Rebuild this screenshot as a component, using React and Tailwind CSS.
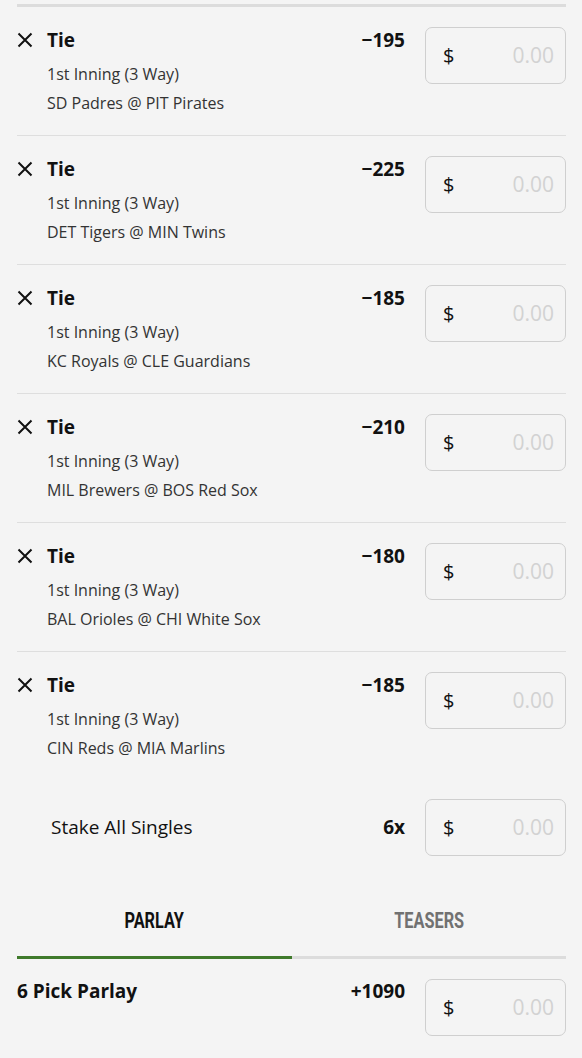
import { useState } from "react";

const picks = [
  { id: 1, odds: "\u2212195", game: "SD Padres @ PIT Pirates" },
  { id: 2, odds: "\u2212225", game: "DET Tigers @ MIN Twins" },
  { id: 3, odds: "\u2212185", game: "KC Royals @ CLE Guardians" },
  { id: 4, odds: "\u2212210", game: "MIL Brewers @ BOS Red Sox" },
  { id: 5, odds: "\u2212180", game: "BAL Orioles @ CHI White Sox" },
  { id: 6, odds: "\u2212185", game: "CIN Reds @ MIA Marlins" },
];

function CloseIcon() {
  return (
    <svg width="16" height="16" viewBox="0 0 16 16" className="shrink-0">
      <path d="M1.5 1.5 L14.5 14.5 M14.5 1.5 L1.5 14.5" stroke="#111" strokeWidth="2" fill="none" />
    </svg>
  );
}

function StakeBox() {
  return (
    <div className="flex h-[57px] w-[141px] shrink-0 items-center justify-between rounded-[7px] border border-[#cfcfcf] pl-[17px] pr-[11px]">
      <span className="text-[20px] text-[#111]">$</span>
      <input
        className="w-[80px] bg-transparent text-right text-[21px] text-[#111] outline-none placeholder:text-[#d2d2d2]"
        placeholder="0.00"
      />
    </div>
  );
}

function PickRow({ pick, last }) {
  return (
    <div className={"flex pt-[20px] pb-[17px] " + (last ? "" : "border-b border-[#dedede]")}>
      <div className="flex-1">
        <div className="flex h-[26px] items-center">
          <div className="flex w-[30px] items-center">
            <CloseIcon />
          </div>
          <span className="text-[19px] font-bold text-[#111]">Tie</span>
        </div>
        <div className="mt-[7px] pl-[30px] text-[16px] leading-[29px] text-[#333]">
          <div>1st Inning (3 Way)</div>
          <div>{pick.game}</div>
        </div>
      </div>
      <div className="flex h-[26px] items-center pr-[20px] text-[19px] font-bold text-[#111]">
        {pick.odds}
      </div>
      <StakeBox />
    </div>
  );
}

export default function App() {
  const [tab, setTab] = useState("parlay");

  return (
    <div
      className="min-h-screen bg-[#f4f4f4] pl-[17px] pr-[16px] pt-[4px]"
      style={{ fontFamily: '"Open Sans", sans-serif' }}
    >
      <div className="h-[3px] bg-[#dcdcdc]" />

      {/* Picks */}
      {picks.map((pick, i) => (
        <PickRow key={pick.id} pick={pick} last={i === picks.length - 1} />
      ))}

      {/* Stake all singles */}
      <div className="mt-[1px] flex items-center pt-[18px]">
        <span className="flex-1 pl-[34px] text-[19px] text-[#111]">Stake All Singles</span>
        <span className="pr-[20px] text-[19px] font-bold text-[#111]">6x</span>
        <StakeBox />
      </div>

      {/* Tabs */}
      <div className="mt-[41px] flex">
        {[
          { key: "parlay", label: "PARLAY" },
          { key: "teasers", label: "TEASERS" },
        ].map((t) => (
          <button
            key={t.key}
            onClick={() => setTab(t.key)}
            className={
              "flex h-[62px] flex-1 items-center justify-center border-b-[3px] pb-[12px] " +
              (tab === t.key ? "border-[#3f7a2b] text-[#111]" : "border-[#dcdcdc] text-[#717171]")
            }
          >
            <span
              className="inline-block scale-x-[0.74] text-[22px] font-bold"
              style={{ fontFamily: "Roboto, sans-serif" }}
            >
              {t.label}
            </span>
          </button>
        ))}
      </div>

      {/* Parlay */}
      <div className="flex pt-[20px]">
        <div className="flex h-[24px] flex-1 items-center text-[19px] font-bold text-[#111]">6 Pick Parlay</div>
        <div className="flex h-[24px] items-center pr-[20px] text-[19px] font-bold text-[#111]">+1090</div>
        <StakeBox />
      </div>
    </div>
  );
}
